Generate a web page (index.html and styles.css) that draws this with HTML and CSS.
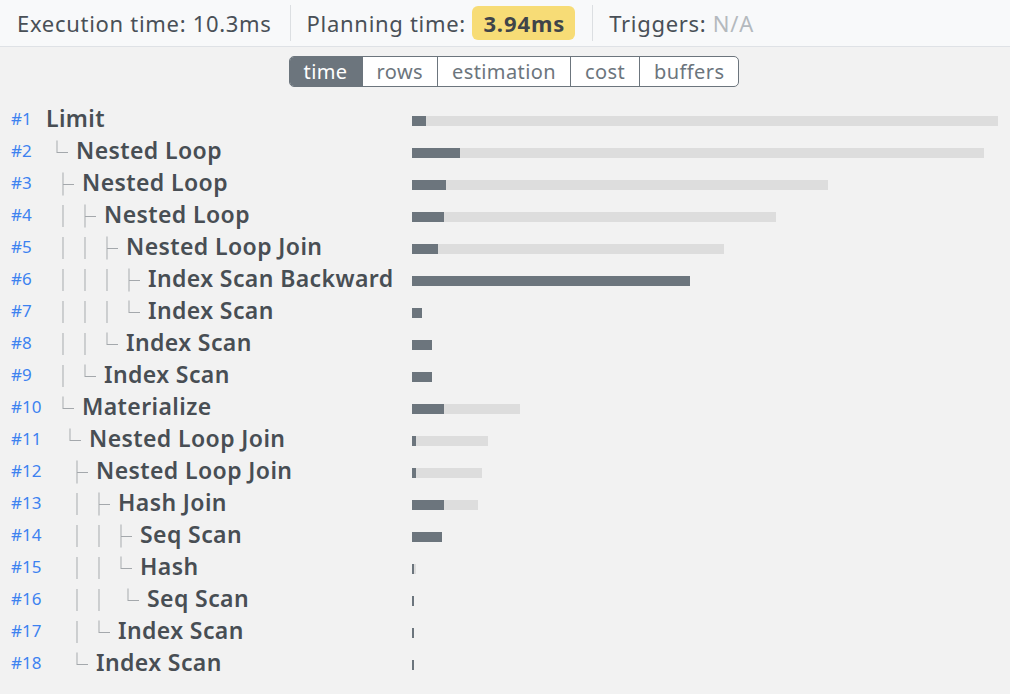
FILE: index.html
```html
<!DOCTYPE html>
<html>
<head>
<meta charset="utf-8">
<link rel="stylesheet" href="styles.css">
</head>
<body>
<header class="stats">
  <div class="stat">Execution time: 10.3ms</div>
  <div class="stat">Planning time: <span class="badge">3.94ms</span></div>
  <div class="stat">Triggers: <span class="muted">N/A</span></div>
</header>
<nav class="tabs-wrap">
  <div class="tabs">
    <span class="tab active">time</span><span class="tab">rows</span><span class="tab">estimation</span><span class="tab">cost</span><span class="tab">buffers</span>
  </div>
</nav>
<main class="plan">
  <div class="row"><span class="num">#1</span><span class="node d0"><span class="name">Limit</span></span><span class="track"><span class="incl" style="width:100%"></span><span class="excl" style="width:2.39%"></span></span></div>
  <div class="row"><span class="num">#2</span><span class="node d0"><span class="g c">└</span><span class="name">Nested Loop</span></span><span class="track"><span class="incl" style="width:97.61%"></span><span class="excl" style="width:8.19%"></span></span></div>
  <div class="row"><span class="num">#3</span><span class="node d1"><span class="g c">├</span><span class="name">Nested Loop</span></span><span class="track"><span class="incl" style="width:70.99%"></span><span class="excl" style="width:5.8%"></span></span></div>
  <div class="row"><span class="num">#4</span><span class="node d1"><span class="g">│</span><span class="g c">├</span><span class="name">Nested Loop</span></span><span class="track"><span class="incl" style="width:62.12%"></span><span class="excl" style="width:5.46%"></span></span></div>
  <div class="row"><span class="num">#5</span><span class="node d1"><span class="g">│</span><span class="g">│</span><span class="g c">├</span><span class="name">Nested Loop Join</span></span><span class="track"><span class="incl" style="width:53.24%"></span><span class="excl" style="width:4.44%"></span></span></div>
  <div class="row"><span class="num">#6</span><span class="node d1"><span class="g">│</span><span class="g">│</span><span class="g">│</span><span class="g c">├</span><span class="name">Index Scan Backward</span></span><span class="track"><span class="incl" style="width:47.44%"></span><span class="excl" style="width:47.44%"></span></span></div>
  <div class="row"><span class="num">#7</span><span class="node d1"><span class="g">│</span><span class="g">│</span><span class="g">│</span><span class="g c">└</span><span class="name">Index Scan</span></span><span class="track"><span class="incl" style="width:1.71%"></span><span class="excl" style="width:1.71%"></span></span></div>
  <div class="row"><span class="num">#8</span><span class="node d1"><span class="g">│</span><span class="g">│</span><span class="g c">└</span><span class="name">Index Scan</span></span><span class="track"><span class="incl" style="width:3.41%"></span><span class="excl" style="width:3.41%"></span></span></div>
  <div class="row"><span class="num">#9</span><span class="node d1"><span class="g">│</span><span class="g c">└</span><span class="name">Index Scan</span></span><span class="track"><span class="incl" style="width:3.41%"></span><span class="excl" style="width:3.41%"></span></span></div>
  <div class="row"><span class="num">#10</span><span class="node d1"><span class="g c">└</span><span class="name">Materialize</span></span><span class="track"><span class="incl" style="width:18.43%"></span><span class="excl" style="width:5.46%"></span></span></div>
  <div class="row"><span class="num">#11</span><span class="node d2"><span class="g c">└</span><span class="name">Nested Loop Join</span></span><span class="track"><span class="incl" style="width:12.97%"></span><span class="excl" style="width:0.68%"></span></span></div>
  <div class="row"><span class="num">#12</span><span class="node d3"><span class="g c">├</span><span class="name">Nested Loop Join</span></span><span class="track"><span class="incl" style="width:11.95%"></span><span class="excl" style="width:0.68%"></span></span></div>
  <div class="row"><span class="num">#13</span><span class="node d3"><span class="g">│</span><span class="g c">├</span><span class="name">Hash Join</span></span><span class="track"><span class="incl" style="width:11.26%"></span><span class="excl" style="width:5.46%"></span></span></div>
  <div class="row"><span class="num">#14</span><span class="node d3"><span class="g">│</span><span class="g">│</span><span class="g c">├</span><span class="name">Seq Scan</span></span><span class="track"><span class="incl" style="width:5.12%"></span><span class="excl" style="width:5.12%"></span></span></div>
  <div class="row"><span class="num">#15</span><span class="node d3"><span class="g">│</span><span class="g">│</span><span class="g c">└</span><span class="name">Hash</span></span><span class="track"><span class="incl" style="width:0.68%"></span><span class="excl" style="width:0.34%"></span></span></div>
  <div class="row"><span class="num">#16</span><span class="node d3"><span class="g">│</span><span class="g">│</span><span class="sp"></span><span class="g c">└</span><span class="name">Seq Scan</span></span><span class="track"><span class="incl" style="width:0.34%"></span><span class="excl" style="width:0.34%"></span></span></div>
  <div class="row"><span class="num">#17</span><span class="node d3"><span class="g">│</span><span class="g c">└</span><span class="name">Index Scan</span></span><span class="track"><span class="incl" style="width:0.34%"></span><span class="excl" style="width:0.34%"></span></span></div>
  <div class="row"><span class="num">#18</span><span class="node d3"><span class="g c">└</span><span class="name">Index Scan</span></span><span class="track"><span class="incl" style="width:0.34%"></span><span class="excl" style="width:0.34%"></span></span></div>
</main>
</body>
</html>
```
FILE: styles.css
```css
* { box-sizing: border-box; }
html, body { margin: 0; padding: 0; }
body {
  background: #f2f2f2;
  font-family: "Noto Sans", "Open Sans", sans-serif;
  color: #495057;
  width: 1010px;
  height: 694px;
  overflow: hidden;
}
.stats {
  display: flex;
  align-items: center;
  height: 47px;
  background: #f8f9fa;
  border-bottom: 1px solid #dfe2e6;
  font-size: 22px;
  letter-spacing: 0.7px;
}
.stat {
  display: flex;
  align-items: center;
  height: 36px;
  padding: 0 17px 0 16px;
  white-space: pre;
}
.stat:first-child { padding: 0 18px 0 17px; }
.stat + .stat { border-left: 1px solid #dcdfe2; }
.badge {
  display: inline-block;
  background: #f7dc76;
  border-radius: 6px;
  padding: 0 10px 0 11px;
  line-height: 34px;
  font-weight: 700;
  color: #3f4449;
  letter-spacing: 0.9px;
}
.muted { color: #b4b9be; }
.tabs-wrap {
  display: flex;
  justify-content: center;
  padding: 9px 0 0 18px;
}
.tabs {
  display: flex;
  height: 31px;
  border: 1px solid #6c757d;
  border-radius: 5px;
  overflow: hidden;
  background: #fff;
}
.tab {
  display: flex;
  align-items: center;
  padding: 0 14px;
  font-size: 20px;
  letter-spacing: 0.4px;
  color: #6c757d;
  border-left: 1px solid #6c757d;
}
.tab:first-child { border-left: none; }
.tab.active { background: #6c757d; color: #fff; }
.plan {
  padding-top: 18px;
}
.row {
  display: flex;
  align-items: center;
  height: 32px;
}
.num {
  flex: 0 0 46px;
  padding-left: 11px;
  padding-bottom: 6px;
  font-size: 17px;
  color: #3d82f0;
}
.node {
  flex: 0 0 366px;
  display: flex;
  align-items: center;
  white-space: nowrap;
  padding-bottom: 7px;
}
.d0 { padding-left: 0; }
.d1 { padding-left: 6px; }
.d2 { padding-left: 13px; }
.d3 { padding-left: 20px; }
.g {
  display: inline-block;
  width: 22px;
  font-family: "Noto Sans CJK KR", "DejaVu Sans", sans-serif;
  font-size: 22px;
  line-height: 22px;
  color: #a4a8ac;
  font-weight: 300;
  will-change: transform;
}
.g.c { width: 30px; }
.sp { display: inline-block; width: 7px; }
.name {
  font-size: 23px;
  font-weight: 600;
  letter-spacing: 0.4px;
  color: #484e54;
}
.track {
  flex: 1;
  display: grid;
  height: 10px;
  margin-right: 12px;
}
.track > span { grid-area: 1 / 1; height: 10px; }
.incl { background: #dddddd; }
.excl { background: #6c757d; }
```
